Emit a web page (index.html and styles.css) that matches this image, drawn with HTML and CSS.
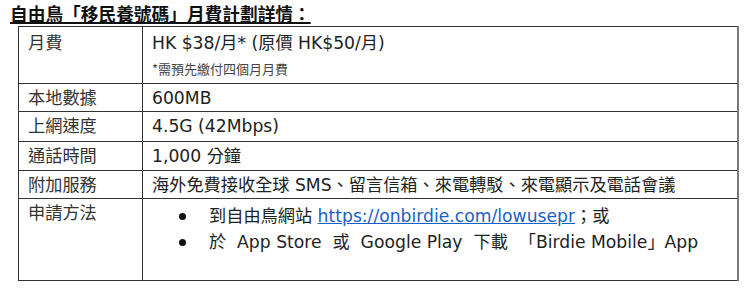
FILE: index.html
```html
<!DOCTYPE html>
<html lang="zh-Hant">
<head>
<meta charset="utf-8">
<link rel="stylesheet" href="styles.css">
</head>
<body>
<h1 class="title">自由鳥「移民養號碼」月費計劃詳情：</h1>
<table class="plan">
  <tr class="r1">
    <td class="key">月費</td>
    <td class="val">HK $38/月* (原價 HK$50/月)<div class="note">*需預先繳付四個月月費</div></td>
  </tr>
  <tr class="r2">
    <td class="key">本地數據</td>
    <td class="val">600MB</td>
  </tr>
  <tr class="r3">
    <td class="key">上網速度</td>
    <td class="val">4.5G (42Mbps)</td>
  </tr>
  <tr class="r4">
    <td class="key">通話時間</td>
    <td class="val">1,000 分鐘</td>
  </tr>
  <tr class="r5">
    <td class="key">附加服務</td>
    <td class="val">海外免費接收全球 SMS、留言信箱、來電轉駁、來電顯示及電話會議</td>
  </tr>
  <tr class="r6">
    <td class="key">申請方法</td>
    <td class="val">
      <ul class="ways">
        <li><span>到自由鳥網站 <a href="#">https://onbirdie.com/lowusepr</a>；或</span></li>
        <li><span>於&nbsp; App Store&nbsp; 或&nbsp; Google Play&nbsp; 下載 &nbsp;「Birdie Mobile」App</span></li>
      </ul>
    </td>
  </tr>
</table>
</body>
</html>
```
FILE: styles.css
```css
html, body {
  margin: 0;
  padding: 0;
  background: #fff;
}
body {
  font-family: "DejaVu Sans", "Noto Sans CJK TC", sans-serif;
  color: #222;
}
.title {
  margin: 0;
  padding: 3px 0 0 10px;
  font-family: "Noto Sans CJK TC", sans-serif;
  font-size: 17.7px;
  line-height: 20px;
  font-weight: 700;
  color: #111;
  text-decoration: underline;
  text-decoration-thickness: 2px;
  text-underline-offset: 1px;
  height: 23px;
}
.plan {
  margin-left: 18px;
  width: 721px;
  border-collapse: collapse;
  font-size: 17.2px;
  table-layout: fixed;
}
.plan td {
  border: 1px solid #333;
  vertical-align: top;
  padding: 4px 0 0 9px;
  line-height: 20px;
}
.plan td:last-child {
  border-right: 2px solid #7a7a7a;
}
.plan td.key {
  width: 114px;
  color: #333;
}
.r1 td { height: 50px; padding-top: 6px; }
.r2 td { height: 23px; }
.r3 td { height: 25px; }
.r4 td { height: 24px; }
.r5 td { height: 23px; }
.r6 td { height: 77px; }
.note {
  font-family: "Noto Sans CJK TC", sans-serif;
  font-size: 13px;
  color: #444;
  margin-top: 8px;
  line-height: 16px;
}
.ways {
  margin: 0;
  padding: 0 0 0 27px;
  list-style: none;
}
.ways li {
  display: flex;
  align-items: center;
  line-height: 26px;
  white-space: nowrap;
}
.ways li::before {
  content: "";
  flex: none;
  width: 7px;
  height: 7px;
  border-radius: 50%;
  background: #111;
  margin-right: 23px;
}
.ways a {
  color: #1a5fc4;
  text-decoration: underline;
}
```
